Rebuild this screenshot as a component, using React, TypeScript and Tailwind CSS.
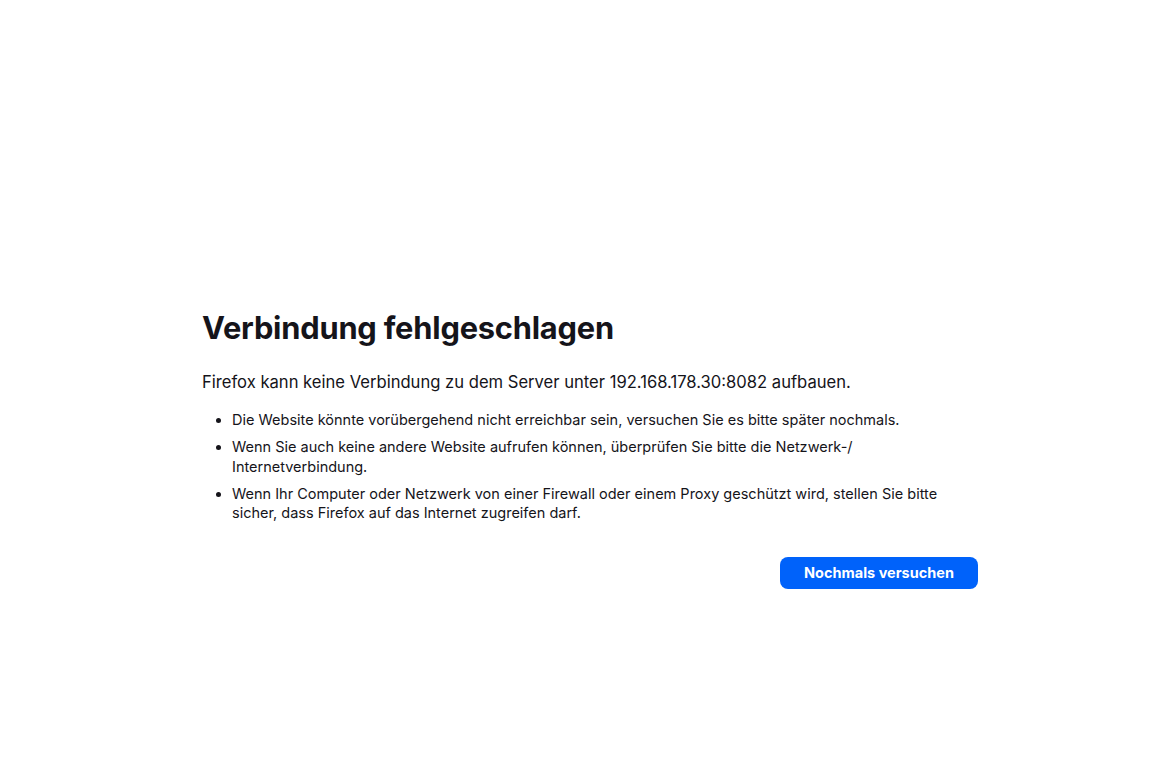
export default function App() {
  return (
    <div
      className="w-[1169px] h-[764px] bg-white text-[#15141a] overflow-hidden"
      style={{ fontFamily: 'Inter, "Noto Sans", sans-serif' }}
    >
      <div className="ml-[202px] w-[776px] pt-[306px]">
        <h1 className="text-[30.8px] leading-[44px] font-bold tracking-[-0.2px]">
          Verbindung fehlgeschlagen
        </h1>
        <p className="mt-[20px] text-[16.6px] leading-[24px]">
          Firefox kann keine Verbindung zu dem Server unter 192.168.178.30:8082 aufbauen.
        </p>
        <ul className="mt-[16px] pl-[30px] list-disc text-[14.5px] leading-[19.5px] flex flex-col gap-[7.5px]">
          <li>Die Website könnte vorübergehend nicht erreichbar sein, versuchen Sie es bitte später nochmals.</li>
          <li>Wenn Sie auch keine andere Website aufrufen können, überprüfen Sie bitte die Netzwerk-/ Internetverbindung.</li>
          <li>Wenn Ihr Computer oder Netzwerk von einer Firewall oder einem Proxy geschützt wird, stellen Sie bitte sicher, dass Firefox auf das Internet zugreifen darf.</li>
        </ul>
        <div className="mt-[34px] flex justify-end">
          <button className="h-[32px] w-[198px] rounded-[8px] bg-[#0062fa] text-white text-[14.5px] font-bold">
            Nochmals versuchen
          </button>
        </div>
      </div>
    </div>
  );
}
